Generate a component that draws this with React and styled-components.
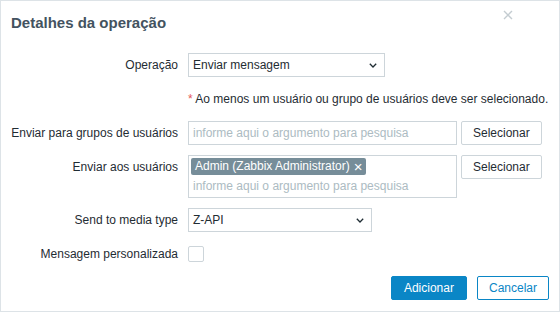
import React from 'react'
import styled, { createGlobalStyle } from "styled-components"

const GlobalStyle = createGlobalStyle`
    html, body {
        margin: 0;
        padding: 0;
        background: #ffffff;
    }
    body {
        font-family: "Liberation Sans", Arial, sans-serif;
        font-size: 12px;
        color: #1f2c33;
    }
`

const Dialog = styled.div`
    box-sizing: border-box;
    width: 560px;
    height: 312px;
    border: 1px solid #dde3e7;
    background: #ffffff;
    padding: 10px 10px 0 10px;
    display: flex;
    flex-direction: column;
`

const Header = styled.div`
    display: flex;
    align-items: flex-start;
    justify-content: space-between;
`

const Title = styled.h4`
    margin: 0;
    font-size: 15px;
    line-height: 24px;
    font-weight: bold;
    color: #435360;
`

const CloseButton = styled.button`
    border: 0;
    background: none;
    padding: 0;
    margin: -1px 36px 0 0;
    width: 10px;
    height: 10px;
    display: flex;
    cursor: pointer;
`

const Form = styled.div`
    margin-top: 18px;
    display: grid;
    grid-template-columns: 167px auto;
    column-gap: 10px;
    row-gap: 10px;
    align-items: start;
`

const Label = styled.div`
    text-align: right;
    line-height: 24px;
    white-space: nowrap;
    color: #1f2c33;
`

const Field = styled.div`
    display: flex;
    align-items: ${p => p.$center ? "center" : "flex-start"};
    gap: 4px;
    min-height: ${p => p.$center ? "24px" : "0"};
`

const Select = styled.div`
    box-sizing: border-box;
    width: ${p => p.$width}px;
    height: 24px;
    border: 1px solid #cdd5da;
    padding: 0 7px 0 4px;
    display: flex;
    align-items: center;
    justify-content: space-between;
    line-height: 22px;
    color: #1f2c33;
`

const Hint = styled.div`
    grid-column: 2;
    line-height: 24px;
    white-space: nowrap;
    color: #1f2c33;
`

const Required = styled.span`
    color: #e45959;
`

const TextInput = styled.div`
    box-sizing: border-box;
    width: 269px;
    height: 24px;
    border: 1px solid #cdd5da;
    padding: 0 4px;
    line-height: 22px;
    color: #acbbc2;
`

const MultiSelect = styled.div`
    box-sizing: border-box;
    width: 269px;
    border: 1px solid #cdd5da;
    padding: 2px;
    display: flex;
    flex-direction: column;
    gap: 2px;
`

const Chips = styled.div`
    display: flex;
    flex-wrap: wrap;
    gap: 2px;
`

const Chip = styled.span`
    display: inline-flex;
    align-items: center;
    gap: 4px;
    height: 17px;
    line-height: 17px;
    padding: 0 4px;
    border-radius: 2px;
    background: #768d99;
    color: #ffffff;
`

const ChipRemove = styled.span`
    font-size: 15px;
    line-height: 17px;
`

const Placeholder = styled.div`
    line-height: 18px;
    padding: 0 2px;
    color: #acbbc2;
`

const Button = styled.button`
    box-sizing: border-box;
    height: 24px;
    padding: 0 ${p => p.$pad || 11}px;
    border-radius: 2px;
    font-family: "Liberation Sans", Arial, sans-serif;
    font-size: 12px;
    line-height: 22px;
    cursor: pointer;
    border: 1px solid ${p => p.$primary || p.$outline ? "#0a86c6" : "#cdd5da"};
    background: ${p => p.$primary ? "#0a86c6" : "#ffffff"};
    color: ${p => p.$primary ? "#ffffff" : p.$outline ? "#0a86c6" : "#1f2c33"};
`

const Checkbox = styled.span`
    box-sizing: border-box;
    display: block;
    width: 16px;
    height: 16px;
    border: 1px solid #cdd5da;
    border-radius: 2px;
    background: #ffffff;
`

const Footer = styled.div`
    margin-top: 10px;
    display: flex;
    justify-content: flex-end;
    gap: 10px;
`

const Chevron = () => (
    <svg width="8" height="5" viewBox="0 0 8 5">
        <polyline points="0.8,0.8 4,4 7.2,0.8" fill="none" stroke="#1f2c33" strokeWidth="1.3" />
    </svg>
)

const OperationDialog = () => {
    return (
        <>
            <GlobalStyle />
            <Dialog>
                <Header>
                    <Title>Detalhes da operação</Title>
                    <CloseButton aria-label="Fechar">
                        <svg width="10" height="10" viewBox="0 0 10 10">
                            <path d="M1 1 L9 9 M9 1 L1 9" stroke="#c4ccd1" strokeWidth="1.4" />
                        </svg>
                    </CloseButton>
                </Header>
                <Form>
                    <Label>Operação</Label>
                    <Field>
                        <Select $width={197}>Enviar mensagem<Chevron /></Select>
                    </Field>

                    <Hint><Required>*</Required> Ao menos um usuário ou grupo de usuários deve ser selecionado.</Hint>

                    <Label>Enviar para grupos de usuários</Label>
                    <Field>
                        <TextInput>informe aqui o argumento para pesquisa</TextInput>
                        <Button>Selecionar</Button>
                    </Field>

                    <Label>Enviar aos usuários</Label>
                    <Field>
                        <MultiSelect>
                            <Chips>
                                <Chip>Admin (Zabbix Administrator)<ChipRemove>×</ChipRemove></Chip>
                            </Chips>
                            <Placeholder>informe aqui o argumento para pesquisa</Placeholder>
                        </MultiSelect>
                        <Button>Selecionar</Button>
                    </Field>

                    <Label>Send to media type</Label>
                    <Field>
                        <Select $width={184}>Z-API<Chevron /></Select>
                    </Field>

                    <Label>Mensagem personalizada</Label>
                    <Field $center>
                        <Checkbox />
                    </Field>
                </Form>
                <Footer>
                    <Button $primary $pad={12}>Adicionar</Button>
                    <Button $outline>Cancelar</Button>
                </Footer>
            </Dialog>
        </>
    )
}

export default OperationDialog
